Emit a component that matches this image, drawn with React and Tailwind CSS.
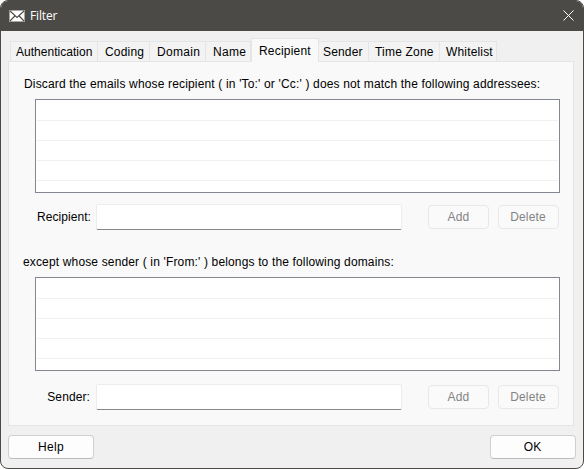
const tabs = [
  { label: "Authentication", box: "w-[88px] border-l", text: "tracking-[0.03px] pl-[5px]" },
  { label: "Coding", box: "w-[52px]", text: "tracking-[0.2px] pl-[7px]" },
  { label: "Domain", box: "w-[56px]", text: "tracking-[0.3px] pl-[7px]" },
  { label: "Name", box: "w-[45px]", text: "tracking-[0.3px] pl-[7px]" },
  { label: "Recipient", box: "w-[68px]", text: "tracking-[0.2px] pl-[7px]", active: true },
  { label: "Sender", box: "w-[50px]", text: "tracking-[0.16px] pl-[4px]" },
  { label: "Time Zone", box: "w-[71px]", text: "tracking-[0.2px] pl-[6px]" },
  { label: "Whitelist", box: "w-[57px]", text: "tracking-[0.16px] pl-[6px]" },
];

function Tab({ label, box, text, active }) {
  return active ? (
    <button className={`${box} relative z-10 -mb-px h-[24px] shrink-0 border border-b-0 border-[#e5e5e5] bg-[#f9f9f9] text-left leading-[20px] whitespace-nowrap`}>
      <span className={`${text} block`}>{label}</span>
    </button>
  ) : (
    <button className={`${box} h-[20px] shrink-0 border-t border-r border-[#e5e5e5] bg-[#f3f3f3] text-left leading-[20px] whitespace-nowrap`}>
      <span className={`${text} block`}>{label}</span>
    </button>
  );
}

function ListBox() {
  return (
    <div className="ml-[26px] h-[94px] w-[525px] overflow-hidden border border-[#828790] bg-white px-px">
      <div className="h-[21px] border-b border-[#f0f0f0]" />
      <div className="h-[20px] border-b border-[#f0f0f0]" />
      <div className="h-[20px] border-b border-[#f0f0f0]" />
      <div className="h-[20px] border-b border-[#f0f0f0]" />
    </div>
  );
}

function EntryRow({ label, spacing, labelStyle }) {
  return (
    <div className={`${spacing} flex h-[26px] items-start`}>
      <label className={`${labelStyle} w-[87px] shrink-0 text-right leading-[26px] whitespace-nowrap`}>{label}</label>
      <input className="h-[26px] w-[306px] shrink-0 rounded-[2px] border border-[#ececec] border-b-[#868686] bg-white outline-none" />
      <button className="mt-px ml-[26px] h-[24px] w-[61px] shrink-0 rounded-[4px] border border-[#e8e8e8] bg-[#fafafa] leading-[22px] tracking-[0.16px] text-[#838383]">Add</button>
      <button className="mt-px ml-[9px] h-[24px] w-[61px] shrink-0 rounded-[4px] border border-[#e8e8e8] bg-[#fafafa] pr-px leading-[22px] tracking-[0.16px] text-[#838383]">Delete</button>
    </div>
  );
}

export default function App() {
  return (
    <div className="h-[469px] w-[584px] overflow-hidden bg-white font-['Liberation_Sans',Arial,sans-serif] text-[12px] text-black">
      <div className="flex h-full flex-col overflow-hidden rounded-[8px] border border-[#4b4a47] bg-[#f0f0f0]">
        <header className="flex h-[30px] shrink-0 items-center bg-[#4b4a47] pr-[9px] pl-[8px] text-white">
          <svg className="mb-px h-[12px] w-[16px]" viewBox="0 0 16 12" fill="none">
            <rect x="0.5" y="0.5" width="15" height="11" fill="#fff" stroke="#a5a5a3" />
            <path d="M1 1l7 6.5L15 1M1 11l4.8-5M15 11l-4.8-5" stroke="#4b4a47" strokeWidth="1.1" />
          </svg>
          <span className="ml-[5px] font-['Open_Sans','Noto_Sans',sans-serif] text-[12px] leading-[30px] tracking-[-0.15px]">Filter</span>
          <svg className="mb-[2px] ml-auto h-[11px] w-[11px]" viewBox="0 0 11 11" fill="none">
            <path d="M0.5 0.5l10 10M10.5 0.5l-10 10" stroke="#fff" />
          </svg>
        </header>

        <nav className="flex h-[30px] shrink-0 items-end pl-[9px]">
          {tabs.map((tab) => (
            <Tab key={tab.label} {...tab} />
          ))}
        </nav>

        <main className="ml-[7px] h-[365px] w-[566px] shrink-0 border border-[#e5e5e5] bg-[#f9f9f9]">
          <p className="mt-[14px] ml-[15px] h-[23px] leading-[16px] tracking-[0.16px] whitespace-nowrap">Discard the emails whose recipient ( in 'To:' or 'Cc:' ) does not match the following addressees:</p>
          <ListBox />
          <EntryRow label="Recipient:" spacing="mt-[11px]" labelStyle="pr-[5px] tracking-[0.06px]" />
          <p className="mt-[24px] ml-[14px] h-[23px] leading-[16px] tracking-[0.15px] whitespace-nowrap">except whose sender ( in 'From:' ) belongs to the following domains:</p>
          <ListBox />
          <EntryRow label="Sender:" spacing="mt-[13px]" labelStyle="pr-[6px] tracking-[0.1px]" />
        </main>

        <footer className="mt-[9px] flex justify-between pr-[7px] pl-[7px]">
          <button className="h-[24px] w-[86px] rounded-[4px] border border-[#d0d0d0] border-b-[#bcbcbc] bg-[#fdfdfd] leading-[22px] tracking-[0.3px]">Help</button>
          <button className="h-[24px] w-[86px] rounded-[4px] border border-[#d0d0d0] border-b-[#bcbcbc] bg-[#fdfdfd] pr-px leading-[22px]">OK</button>
        </footer>
      </div>
    </div>
  );
}
